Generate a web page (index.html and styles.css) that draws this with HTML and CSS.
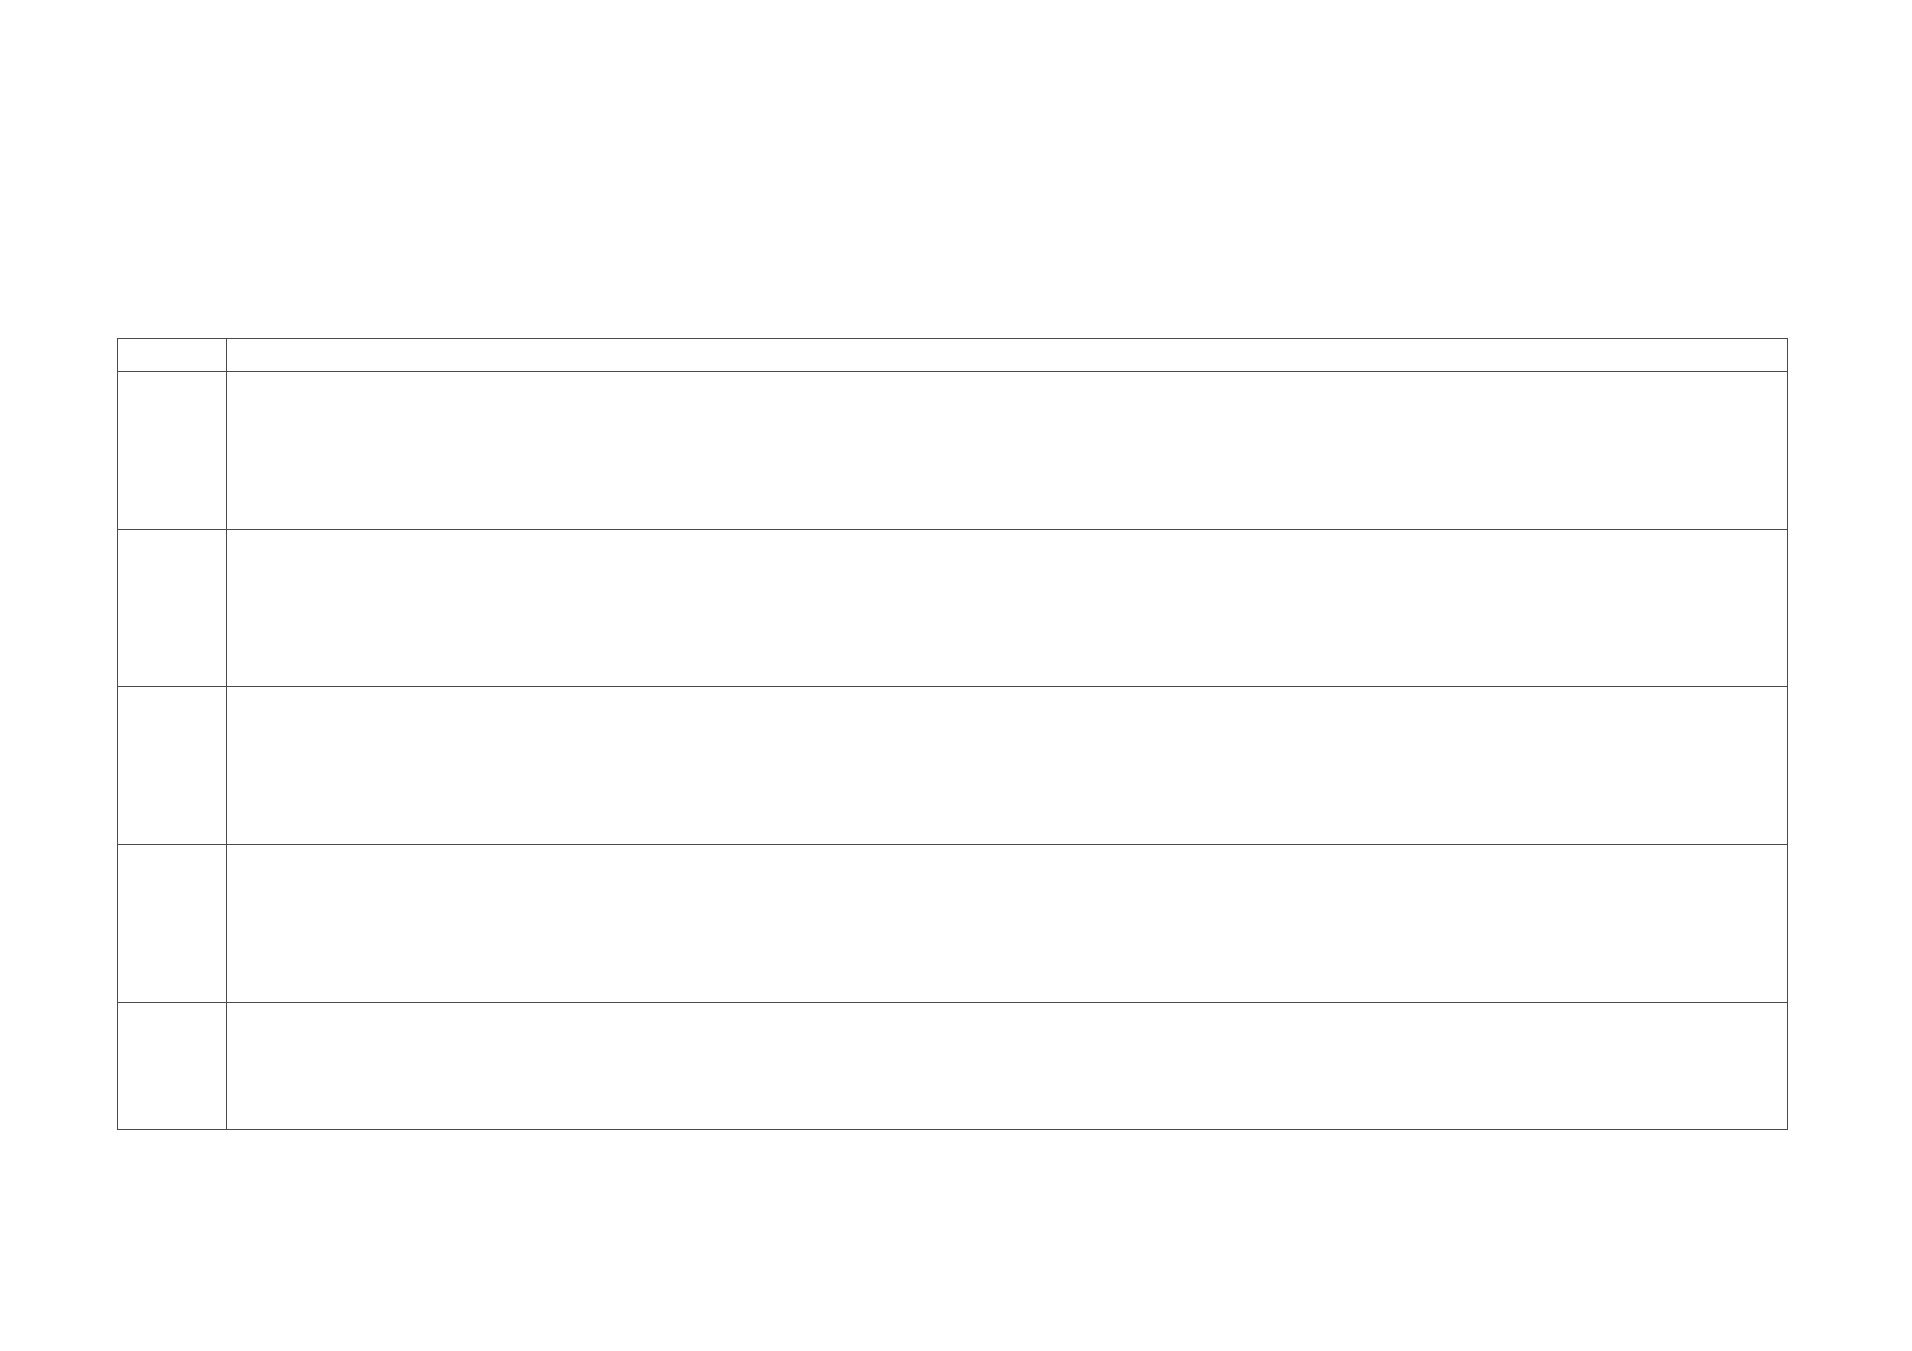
FILE: index.html
```html
<!DOCTYPE html>
<html>
	<head>
		<meta charset="UTF-8">
		<title>表格</title>
		<link rel="stylesheet" href="styles.css">
	</head>
	<body>
		<div class="page">
			<table class="sheet">
				<tr class="head">
					<td class="num"></td>
					<td></td>
				</tr>
				<tr class="row">
					<td class="num"></td>
					<td></td>
				</tr>
				<tr class="row row2">
					<td class="num"></td>
					<td></td>
				</tr>
				<tr class="row">
					<td class="num"></td>
					<td></td>
				</tr>
				<tr class="row">
					<td class="num"></td>
					<td></td>
				</tr>
				<tr class="last">
					<td class="num"></td>
					<td></td>
				</tr>
			</table>
		</div>
	</body>
</html>
```
FILE: styles.css
```css
*{
	margin: 0;
	padding: 0;
}
body{
	background-color: #fff;
	font-family: "Liberation Sans", Arial, sans-serif;
}
.page{
	padding: 338px 0 0 117px;
}
.sheet{
	width: 1671px;
	border-collapse: collapse;
	table-layout: fixed;
}
.sheet td{
	border: 1px solid #4a4a4a;
	padding: 0;
}
.num{
	width: 108px;
}
.head{
	height: 33px;
}
.row{
	height: 158px;
}
.row2{
	height: 157px;
}
.last{
	height: 127px;
}
```
